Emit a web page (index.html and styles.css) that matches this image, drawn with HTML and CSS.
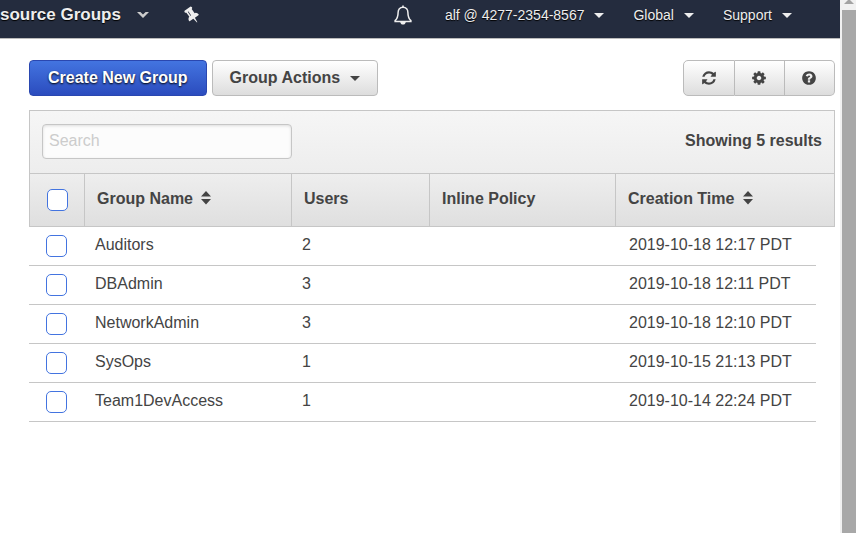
FILE: index.html
```html
<!DOCTYPE html>
<html lang="en">
<head>
<meta charset="utf-8">
<title>Groups</title>
<link rel="stylesheet" href="styles.css">
</head>
<body>
<div class="page">
  <nav class="topbar">
    <a class="service" href="#">source Groups
      <svg class="chevron" viewBox="0 0 12 8"><path d="M0 1h3.400L6 3.400 8.600 1H12L6 7z"/></svg></a>
    <a class="pin" href="#" aria-label="Pin"><svg viewBox="0 0 1792 1792"><path transform="rotate(-35 896 896)" d="M800 864v-448q0-14-9-23t-23-9-23 9-9 23v448q0 14 9 23t23 9 23-9 9-23zm672 352q0 26-19 45t-45 19h-429l-51 483q-2 12-10.500 20.500t-20.500 8.500h-1q-27 0-32-27l-76-485h-404q-26 0-45-19t-19-45q0-123 78.500-221.500t177.500-98.500v-512q-52 0-90-38t-38-90 38-90 90-38h640q52 0 90 38t38 90-38 90-90 38v512q99 0 177.500 98.500t78.500 221.500z"/></svg></a>
    <div class="account">
      <a class="bell" href="#" aria-label="Notifications"><svg viewBox="0 0 18 20"><path class="bell-body" d="M9 2.200c-3.200 0-4.900 2.300-4.900 5.300 0 4.300-.9 6.200-3 8.100v.9h15.800v-.9c-2.100-1.900-3-3.800-3-8.100 0-3-1.700-5.300-4.900-5.300z"/><path class="bell-fill" d="M8.200.6h1.600v2H8.200zM6.200 17h5.600c-.3 1.600-1.300 2.600-2.800 2.600S6.500 18.600 6.200 17z"/></svg></a>
      <a class="menu" href="#">alf @ 4277-2354-8567 <span class="caret"></span></a>
      <a class="menu" href="#">Global <span class="caret"></span></a>
      <a class="menu" href="#">Support <span class="caret"></span></a>
    </div>
  </nav>
  <main>
    <div class="actions">
      <button class="btn primary" type="button">Create New Group</button>
      <button class="btn" type="button">Group Actions <span class="caret"></span></button>
      <div class="tools">
        <button type="button" aria-label="Refresh"><svg viewBox="0 0 1792 1792"><path d="M1639 1056q0 5-1 7-64 268-268 434.500t-478 166.500q-146 0-282.500-55t-243.500-157l-129 129q-19 19-45 19t-45-19-19-45v-448q0-26 19-45t45-19h448q26 0 45 19t19 45-19 45l-137 137q71 66 161 102t187 36q134 0 250-65t186-179q11-17 53-117 8-23 30-23h192q13 0 22.500 9.500t9.500 22.500zm25-800v448q0 26-19 45t-45 19h-448q-26 0-45-19t-19-45 19-45l138-138q-148-137-349-137-134 0-250 65t-186 179q-11 17-53 117-8 23-30 23h-199q-13 0-22.500-9.500t-9.500-22.500v-7q65-268 270-434.500t480-166.500q146 0 284 55.500t245 156.500l130-129q19-19 45-19t45 19 19 45z"/></svg></button>
        <button type="button" aria-label="Settings"><svg viewBox="0 0 1792 1792"><path d="M1152 896q0-106-75-181t-181-75-181 75-75 181 75 181 181 75 181-75 75-181zm512-109v222q0 12-8 23t-20 13l-185 28q-19 54-39 91 35 50 107 138 10 12 10 25t-9 23q-27 37-99 108t-94 71q-12 0-26-9l-138-108q-44 23-91 38-16 136-29 186-7 28-36 28h-222q-14 0-24.500-8.500t-11.500-21.500l-28-184q-49-16-90-37l-141 107q-10 9-25 9-14 0-25-11-126-114-165-168-7-10-7-23 0-12 8-23 15-21 51-66.500t54-70.500q-27-50-41-99l-183-27q-13-2-21-12.500t-8-23.500v-222q0-12 8-23t19-13l186-28q14-46 39-92-40-57-107-138-10-12-10-24 0-10 9-23 26-36 98.500-107.500t94.500-71.500q13 0 26 10l138 107q44-23 91-38 16-136 29-186 7-28 36-28h222q14 0 24.500 8.500t11.500 21.500l28 184q49 16 90 37l142-107q9-9 24-9 13 0 25 10 129 119 165 170 7 8 7 22 0 12-8 23-15 21-51 66.500t-54 70.500q26 50 41 98l183 28q13 2 21 12.500t8 23.500z"/></svg></button>
        <button type="button" aria-label="Help"><svg viewBox="0 0 1792 1792"><path d="M1024 1376v-192q0-14-9-23t-23-9h-192q-14 0-23 9t-9 23v192q0 14 9 23t23 9h192q14 0 23-9t9-23zm256-672q0-88-55.500-163t-138.500-116-170-41q-243 0-371 213-15 24 8 42l132 100q7 6 19 6 16 0 25-12 53-68 86-92 34-24 86-24 48 0 85.500 26t37.500 59q0 38-20 61t-68 45q-63 28-115.500 86.500t-52.500 125.500v36q0 14 9 23t23 9h192q14 0 23-9t9-23q0-19 21.500-49.500t54.500-49.500q32-18 49-28.500t46-35 44.500-48 28-60.500 12.500-81zm384 192q0 209-103 385.500t-279.500 279.500-385.500 103-385.500-103-279.500-279.500-103-385.500 103-385.500 279.500-279.500 385.500-103 385.500 103 279.500 279.500 103 385.500z"/></svg></button>
      </div>
    </div>
    <div class="filter">
      <input class="search" type="text" placeholder="Search" aria-label="Search">
      <span class="count">Showing 5 results</span>
    </div>
    <table>
      <colgroup><col class="c-check"><col class="c-name"><col class="c-users"><col class="c-policy"><col><col class="c-gutter"></colgroup>
      <thead>
        <tr>
          <th class="check"><input type="checkbox" aria-label="Select all"></th>
          <th>Group Name <svg class="sort" viewBox="0 0 10 14"><path d="M5 0l5 5.500H0zM0 8h10L5 13.500z"/></svg></th>
          <th>Users</th>
          <th>Inline Policy</th>
          <th colspan="2">Creation Time <svg class="sort" viewBox="0 0 10 14"><path d="M5 0l5 5.500H0zM0 8h10L5 13.500z"/></svg></th>
        </tr>
      </thead>
      <tbody>
        <tr><td class="check"><input type="checkbox" aria-label="Auditors"></td><td>Auditors</td><td>2</td><td></td><td>2019-10-18 12:17 PDT</td></tr>
        <tr><td class="check"><input type="checkbox" aria-label="DBAdmin"></td><td>DBAdmin</td><td>3</td><td></td><td>2019-10-18 12:11 PDT</td></tr>
        <tr><td class="check"><input type="checkbox" aria-label="NetworkAdmin"></td><td>NetworkAdmin</td><td>3</td><td></td><td>2019-10-18 12:10 PDT</td></tr>
        <tr><td class="check"><input type="checkbox" aria-label="SysOps"></td><td>SysOps</td><td>1</td><td></td><td>2019-10-15 21:13 PDT</td></tr>
        <tr><td class="check"><input type="checkbox" aria-label="Team1DevAccess"></td><td>Team1DevAccess</td><td>1</td><td></td><td>2019-10-14 22:24 PDT</td></tr>
      </tbody>
    </table>
  </main>
</div>
<div class="scrollbar"><svg viewBox="0 0 14 10"><path d="M7 0h1l4 4H2l4-4z"/></svg><div class="thumb"></div></div>
</body>
</html>
```
FILE: styles.css
```css
* { box-sizing: border-box; }
body {
  margin: 0;
  display: flex;
  min-height: 100vh;
  background: #fff;
  color: #444;
  font: 16px/20px "Liberation Sans", Arial, sans-serif;
}
.page { flex: 1; min-width: 0; }
svg { display: block; fill: currentColor; }
button, input { font: inherit; color: inherit; margin: 0; }

.topbar {
  display: flex;
  align-items: center;
  height: 39px;
  padding-bottom: 8px;
  background: #242c3e;
  border-bottom: 1px solid #bbb;
  color: #eee;
}
.topbar a {
  display: flex;
  align-items: center;
  color: inherit;
  text-decoration: none;
  text-shadow: 0 1px 1px #000;
  white-space: nowrap;
}
.service { font-size: 17px; font-weight: bold; gap: 16px; }
.chevron { width: 12px; height: 8px; color: #ccc; }
.pin { margin-left: 34px; color: #fff; }
.pin svg { width: 18px; height: 18px; }
.account { display: flex; align-items: center; margin-left: auto; padding-right: 48px; font-size: 14px; }
.bell { margin-right: 33px; color: #fff; }
.bell svg { width: 18px; height: 20px; }
.bell-body { fill: none; stroke: currentColor; stroke-width: 1.5; }
.menu { gap: 10px; color: #ddd; }
.menu + .menu { margin-left: 29px; }
.caret { border: 5px solid transparent; border-top: 5px solid; border-bottom: 0; }

main { padding: 21px 5px 0 29px; }
.actions { display: flex; gap: 5px; margin-bottom: 14px; }
.btn, .tools button {
  height: 36px;
  border: 1px solid #bbb;
  border-radius: 4px;
  background: linear-gradient(#fff, #ddd);
}
.btn {
  display: flex;
  align-items: center;
  gap: 10px;
  padding: 0 17px;
  font-weight: bold;
}
.primary {
  padding: 0 18px;
  border-color: #2a47b0;
  background: linear-gradient(#4374e0, #2b4cbe);
  color: #fff;
  text-shadow: 0 1px 2px #000;
}
.tools { display: flex; margin-left: auto; }
.tools button { width: 50px; padding: 0 16px; border-radius: 0; }
.tools button + button { border-left: 0; }
.tools button:first-child { border-radius: 5px 0 0 5px; width: 52px; padding: 0 17px; }
.tools button:last-child { border-radius: 0 5px 5px 0; }
.tools svg { width: 16px; height: 16px; }

.filter {
  display: flex;
  align-items: center;
  justify-content: space-between;
  height: 63px;
  padding: 0 12px 2px;
  border: 1px solid #c6c6c6;
  border-bottom: 0;
  background: linear-gradient(#f6f6f6, #ededed);
}
.search {
  width: 250px;
  height: 35px;
  padding: 0 6px;
  border: 1px solid #c6c6c6;
  border-radius: 4px;
  background: #fcfcfc;
  box-shadow: inset 0 1px 3px #ddd;
}
.search::placeholder { color: #ccc; opacity: 1; }
.count { font-weight: bold; }

table { width: 100%; table-layout: fixed; border-collapse: separate; border-spacing: 0; }
.c-check { width: 55px; }
.c-name { width: 207px; }
.c-users { width: 138px; }
.c-policy { width: 186px; }
.c-gutter { width: 19px; }
th {
  height: 54px;
  padding: 0 12px 2px;
  border: 1px solid #c6c6c6;
  border-right: 0;
  background: linear-gradient(#eee, #dfdfdf);
  text-align: left;
}
th:last-child { border-right: 1px solid #c6c6c6; }
.sort { display: inline-block; width: 10px; height: 14px; margin-left: 4px; vertical-align: -1px; }
td { height: 39px; padding: 0 12px 2px 11px; border-bottom: 1px solid #c6c6c6; }
td:last-child { padding-left: 14px; padding-right: 0; }
.check { padding: 0 0 0 17px; }
input[type="checkbox"] {
  display: block;
  appearance: none;
  width: 21px;
  height: 22px;
  border: 1px solid #4374e0;
  border-radius: 5px;
  background: #fff;
}

.scrollbar { display: flex; flex-direction: column; width: 16px; padding-left: 2px; background: #f1f1f1; }
.scrollbar svg { width: 14px; height: 10px; color: #a3a3a3; }
.thumb { flex: 1; background: #a8a8a8; }
```
